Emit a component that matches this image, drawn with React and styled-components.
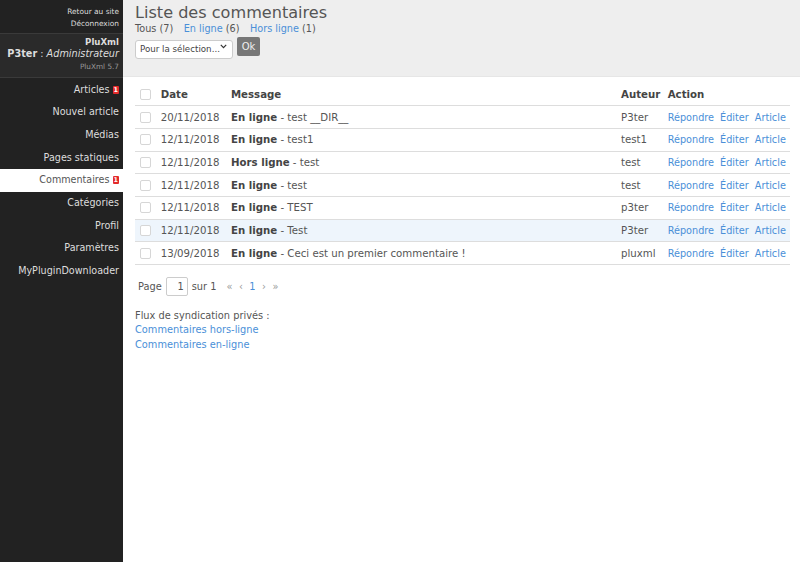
import React from 'react'
import styled, { createGlobalStyle } from 'styled-components'

const GlobalStyle = createGlobalStyle`
    html, body {
        margin: 0;
        padding: 0;
        background: #fff;
    }
    body {
        font-family: "DejaVu Sans", Verdana, sans-serif;
        color: #555;
    }
    * {
        box-sizing: border-box;
    }
`;

const Page = styled.div`
    display: flex;
    min-height: 100vh;
`;

const Sidebar = styled.aside`
    width: 123px;
    flex-shrink: 0;
    background: #222;
    color: #ddd;
    text-align: right;
`;

const TopLinks = styled.div`
    padding: 5.5px 4px 4px 0;
    height: 33px;
    font-size: 7.4px;
    line-height: 12px;

    a {
        display: block;
        color: #ddd;
        text-decoration: none;
    }
`;

const UserBox = styled.div`
    background: #2a2a2a;
    border-top: 1px solid #3a3a3a;
    border-bottom: 1px solid #3a3a3a;
    height: 45px;
    padding: 3px 4px 0 0;
`;

const SiteName = styled.div`
    font-weight: bold;
    font-size: 8.6px;
    line-height: 11px;
`;

const UserLine = styled.div`
    font-size: 9.7px;
    line-height: 11px;

    strong {
        font-weight: bold;
    }
    em {
        font-style: italic;
    }
`;

const Version = styled.div`
    font-size: 7.3px;
    line-height: 15px;
    color: #999;
`;

const Menu = styled.nav`
    display: flex;
    flex-direction: column;
    padding-top: 0.5px;
`;

const MenuItem = styled.a`
    display: block;
    height: 22.7px;
    line-height: 22.7px;
    padding-right: 4px;
    font-size: 9.6px;
    color: ${props => props.$active ? '#555' : '#ddd'};
    background: ${props => props.$active ? '#fff' : 'transparent'};
    text-decoration: none;
    white-space: nowrap;
`;

const Badge = styled.span`
    display: inline-block;
    vertical-align: top;
    margin-top: 7px;
    margin-left: 3px;
    width: 6.5px;
    height: 8px;
    line-height: 8px;
    border-radius: 1px;
    background: #e32a2a;
    color: #fff;
    font-size: 6.5px;
    font-weight: bold;
    text-align: center;
`;

const Main = styled.main`
    flex: 1;
    min-width: 0;
`;

const Header = styled.header`
    background: #eee;
    height: 77px;
    padding: 4px 12px 0;
    border-bottom: 1px solid #e6e6e6;
`;

const Title = styled.h1`
    margin: 0;
    font-size: 16.1px;
    font-weight: normal;
    line-height: 18px;
    color: #555;
`;

const Filters = styled.div`
    display: flex;
    gap: 10.5px;
    font-size: 9.7px;
    line-height: 12px;
    margin-top: 0.5px;
    color: #555;
`;

const Link = styled.a`
    color: #4a8fd8;
    text-decoration: none;
`;

const Actions = styled.div`
    display: flex;
    gap: 4px;
    margin-top: 2.5px;
`;

const SelectWrap = styled.div`
    position: relative;
    width: 98px;
    height: 19px;

    svg {
        position: absolute;
        right: 6px;
        top: 7px;
        pointer-events: none;
    }
`;

const Select = styled.select`
    appearance: none;
    width: 100%;
    height: 100%;
    border: 1px solid #ccc;
    border-radius: 3px;
    background: #fff;
    padding: 0 0 0 4px;
    font-family: inherit;
    font-size: 8.7px;
    color: #444;
`;

const OkButton = styled.button`
    width: 23px;
    height: 19px;
    border: none;
    border-radius: 2px;
    background: #777;
    color: #eee;
    font-family: inherit;
    font-size: 10px;
    padding: 0;
`;

const Content = styled.div`
    padding: 6px 10px 0 12px;
`;

const Table = styled.table`
    width: 100%;
    table-layout: fixed;
    border-collapse: collapse;
    font-size: 10.2px;
    color: #555;

    th, td {
        text-align: left;
        padding: 0 0 0 5px;
        height: 22.7px;
        border-bottom: 1px solid #ddd;
        white-space: nowrap;
    }
    th {
        color: #444;
        font-weight: bold;
    }
`;

const Row = styled.tr`
    background: ${props => props.$highlight ? '#eef5fc' : 'transparent'};
`;

const Box = styled.input.attrs({ type: 'checkbox' })`
    appearance: none;
    display: block;
    margin: 0;
    width: 11px;
    height: 11px;
    border: 1px solid #d6d6d6;
    border-radius: 2px;
    background: #fff;
`;

const Status = styled.strong`
    color: #444;
`;

const ActionLinks = styled.div`
    display: flex;
    gap: 6px;
    font-size: 9.7px;
`;

const Pagination = styled.div`
    display: flex;
    align-items: center;
    gap: 4px;
    margin-top: 12px;
    padding-left: 3px;
    font-size: 9.8px;
`;

const PageInput = styled.input`
    width: 22px;
    height: 19px;
    border: 1px solid #ccc;
    border-radius: 2px;
    text-align: right;
    padding: 0 3px;
    font-family: inherit;
    font-size: 9.8px;
    color: #555;
`;

const Arrows = styled.span`
    display: flex;
    align-items: center;
    gap: 6.5px;
    margin-left: 6px;
    color: #999;
    font-size: 9.8px;
`;

const Feeds = styled.div`
    margin-top: 12.5px;
    font-size: 9.8px;
    line-height: 14.5px;

    a {
        display: block;
    }
`;

const menu = [
    { label: 'Articles', badge: 1 },
    { label: 'Nouvel article' },
    { label: 'Médias' },
    { label: 'Pages statiques' },
    { label: 'Commentaires', badge: 1, active: true },
    { label: 'Catégories' },
    { label: 'Profil' },
    { label: 'Paramètres' },
    { label: 'MyPluginDownloader' },
];

const comments = [
    { date: '20/11/2018', status: 'En ligne', text: 'test __DIR__', author: 'P3ter' },
    { date: '12/11/2018', status: 'En ligne', text: 'test1', author: 'test1' },
    { date: '12/11/2018', status: 'Hors ligne', text: 'test', author: 'test' },
    { date: '12/11/2018', status: 'En ligne', text: 'test', author: 'test' },
    { date: '12/11/2018', status: 'En ligne', text: 'TEST', author: 'p3ter' },
    { date: '12/11/2018', status: 'En ligne', text: 'Test', author: 'P3ter', highlight: true },
    { date: '13/09/2018', status: 'En ligne', text: 'Ceci est un premier commentaire !', author: 'pluxml' },
];

function App() {
    return (
        <Page>
            <GlobalStyle />
            <Sidebar>
                <TopLinks>
                    <a href="#">Retour au site</a>
                    <a href="#">Déconnexion</a>
                </TopLinks>
                <UserBox>
                    <SiteName>PluXml</SiteName>
                    <UserLine><strong>P3ter</strong> : <em>Administrateur</em></UserLine>
                    <Version>PluXml 5.7</Version>
                </UserBox>
                <Menu>
                    {menu.map(item => (
                        <MenuItem key={item.label} href="#" $active={item.active}>
                            {item.label}
                            {item.badge && <Badge>{item.badge}</Badge>}
                        </MenuItem>
                    ))}
                </Menu>
            </Sidebar>
            <Main>
                <Header>
                    <Title>Liste des commentaires</Title>
                    <Filters>
                        <span>Tous (7)</span>
                        <span><Link href="#">En ligne</Link> (6)</span>
                        <span><Link href="#">Hors ligne</Link> (1)</span>
                    </Filters>
                    <Actions>
                        <SelectWrap>
                            <Select defaultValue="">
                                <option value="">Pour la sélection...</option>
                            </Select>
                            <svg width="7" height="5" viewBox="0 0 7 5">
                                <path d="M0.8 0.8 L3.5 3.6 L6.2 0.8" fill="none" stroke="#333" strokeWidth="1.2" />
                            </svg>
                        </SelectWrap>
                        <OkButton>Ok</OkButton>
                    </Actions>
                </Header>
                <Content>
                    <Table>
                        <colgroup>
                            <col style={{ width: 20.7 }} />
                            <col style={{ width: 70.3 }} />
                            <col />
                            <col style={{ width: 46.7 }} />
                            <col style={{ width: 127.3 }} />
                        </colgroup>
                        <thead>
                            <tr>
                                <th><Box /></th>
                                <th>Date</th>
                                <th>Message</th>
                                <th>Auteur</th>
                                <th>Action</th>
                            </tr>
                        </thead>
                        <tbody>
                            {comments.map((c, i) => (
                                <Row key={i} $highlight={c.highlight}>
                                    <td><Box /></td>
                                    <td>{c.date}</td>
                                    <td><Status>{c.status}</Status> - {c.text}</td>
                                    <td>{c.author}</td>
                                    <td>
                                        <ActionLinks>
                                            <Link href="#">Répondre</Link>
                                            <Link href="#">Éditer</Link>
                                            <Link href="#">Article</Link>
                                        </ActionLinks>
                                    </td>
                                </Row>
                            ))}
                        </tbody>
                    </Table>
                    <Pagination>
                        <span>Page</span>
                        <PageInput defaultValue="1" />
                        <span>sur 1</span>
                        <Arrows>
                            <span>«</span>
                            <span>‹</span>
                            <Link href="#">1</Link>
                            <span>›</span>
                            <span>»</span>
                        </Arrows>
                    </Pagination>
                    <Feeds>
                        Flux de syndication privés :
                        <Link href="#">Commentaires hors-ligne</Link>
                        <Link href="#">Commentaires en-ligne</Link>
                    </Feeds>
                </Content>
            </Main>
        </Page>
    );
}

export default App;
